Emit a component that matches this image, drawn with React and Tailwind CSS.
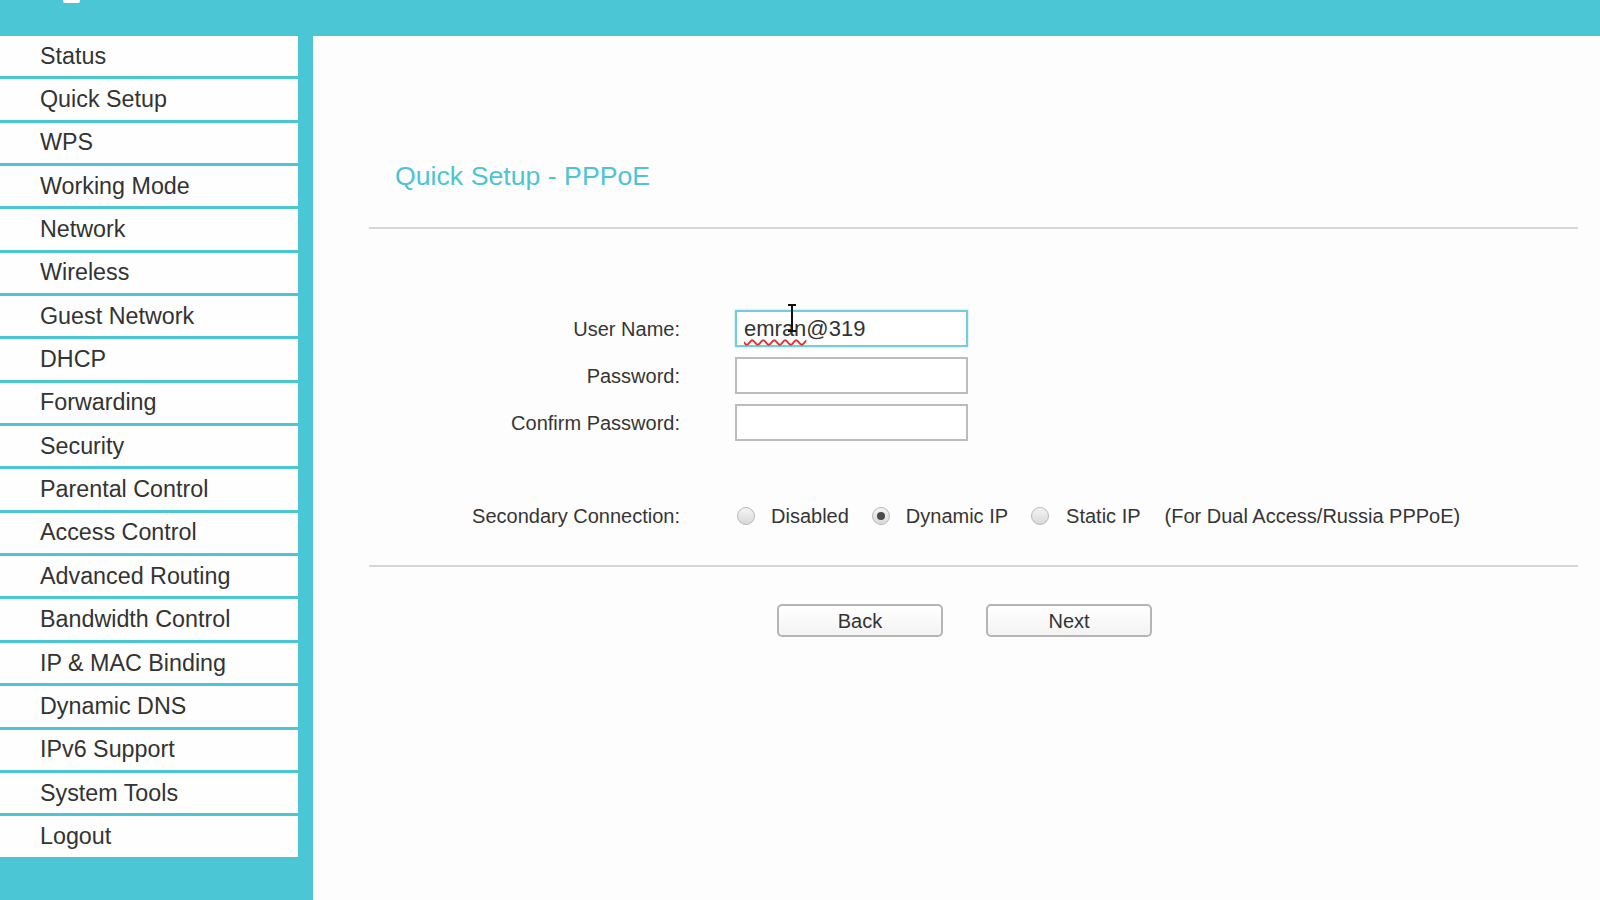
import React from "react";

const items = [
  "Status",
  "Quick Setup",
  "WPS",
  "Working Mode",
  "Network",
  "Wireless",
  "Guest Network",
  "DHCP",
  "Forwarding",
  "Security",
  "Parental Control",
  "Access Control",
  "Advanced Routing",
  "Bandwidth Control",
  "IP & MAC Binding",
  "Dynamic DNS",
  "IPv6 Support",
  "System Tools",
  "Logout",
];

function Radio({ checked }) {
  return (
    <div className="w-[18px] h-[18px] rounded-full border border-[#b8b8b8] bg-gradient-to-b from-[#f4f4f4] to-[#d9d9d9] flex items-center justify-center shrink-0">
      {checked && <div className="w-[8px] h-[8px] rounded-full bg-[#4a4a4a]" />}
    </div>
  );
}

function Row({ label, children }) {
  return (
    <div className="flex items-center h-[37px]">
      <div className="w-[311px] text-right text-[20px] text-[#353535]">{label}</div>
      <div className="ml-[55px] flex items-center">{children}</div>
    </div>
  );
}

export default function App() {
  return (
    <div
      className="w-[1600px] h-[900px] flex flex-col overflow-hidden bg-[#fdfdfd]"
      style={{ fontFamily: '"Liberation Sans", Arial, sans-serif' }}
    >
      <div className="h-[36px] bg-[#4ac6d4] shrink-0 relative">
        <div className="absolute left-[63px] top-0 w-[17px] h-[3px] bg-white rounded-b-[2px]" />
      </div>
      <div className="flex flex-1 min-h-0">
        <div className="w-[313px] bg-[#4ac6d4] shrink-0 flex flex-col gap-[3px]">
          {items.map((t) => (
            <div
              key={t}
              className="w-[298px] h-[40.35px] bg-[#fefefe] flex items-center pl-[40px] text-[23.3px] text-[#333] whitespace-nowrap"
            >
              {t}
            </div>
          ))}
        </div>
        <div className="flex-1 pl-[56px] pr-[22px] pt-[125px] relative">
          <div className="ml-[26px] text-[26.7px] leading-[31px] text-[#4ec4d3]">
            Quick Setup - PPPoE
          </div>
          <div className="mt-[35px] h-[2px] bg-[#d6d6d6]" />
          <div className="mt-[81px] flex flex-col gap-[10px]">
            <Row label="User Name:">
              <div className="w-[233px] h-[37px] border-2 border-[#74cdd8] shadow-[0_0_2px_#9fdde5] bg-white flex items-center pl-[7px] text-[22px] text-[#333]">
                <span className="underline decoration-wavy decoration-[#e03030] decoration-[1.5px] underline-offset-[3px]">emran</span>
                <span>@319</span>
              </div>
            </Row>
            <Row label="Password:">
              <div className="w-[233px] h-[37px] border-2 border-[#bcbcbc] bg-white" />
            </Row>
            <Row label="Confirm Password:">
              <div className="w-[233px] h-[37px] border-2 border-[#bcbcbc] bg-white" />
            </Row>
          </div>
          <div className="mt-[56px]">
            <Row label="Secondary Connection:">
              <div className="ml-[2px] flex items-center text-[20px] text-[#353535] whitespace-nowrap">
                <Radio />
                <span className="ml-[16px]">Disabled</span>
                <div className="ml-[23px]"><Radio checked /></div>
                <span className="ml-[16px]">Dynamic IP</span>
                <div className="ml-[23px]"><Radio /></div>
                <span className="ml-[17px]">Static IP</span>
                <span className="ml-[24px]">(For Dual Access/Russia PPPoE)</span>
              </div>
            </Row>
          </div>
          <div className="mt-[31px] h-[2px] bg-[#d6d6d6]" />
          <div className="mt-[37px] flex pl-[408px] gap-[43px]">
            <button className="w-[166px] h-[33px] rounded-[5px] border-2 border-[#b5b5b5] bg-gradient-to-b from-white to-[#f3f3f3] text-[20px] text-[#333] flex items-center justify-center">
              Back
            </button>
            <button className="w-[166px] h-[33px] rounded-[5px] border-2 border-[#b5b5b5] bg-gradient-to-b from-white to-[#f3f3f3] text-[20px] text-[#333] flex items-center justify-center">
              Next
            </button>
          </div>
          <svg
            className="absolute left-[472px] top-[268px]"
            width="14"
            height="28"
            viewBox="0 0 14 28"
          >
            <path d="M3 1 H11 M7 1 V27 M3 27 H11" stroke="#111" strokeWidth="2" fill="none" />
          </svg>
        </div>
      </div>
    </div>
  );
}
